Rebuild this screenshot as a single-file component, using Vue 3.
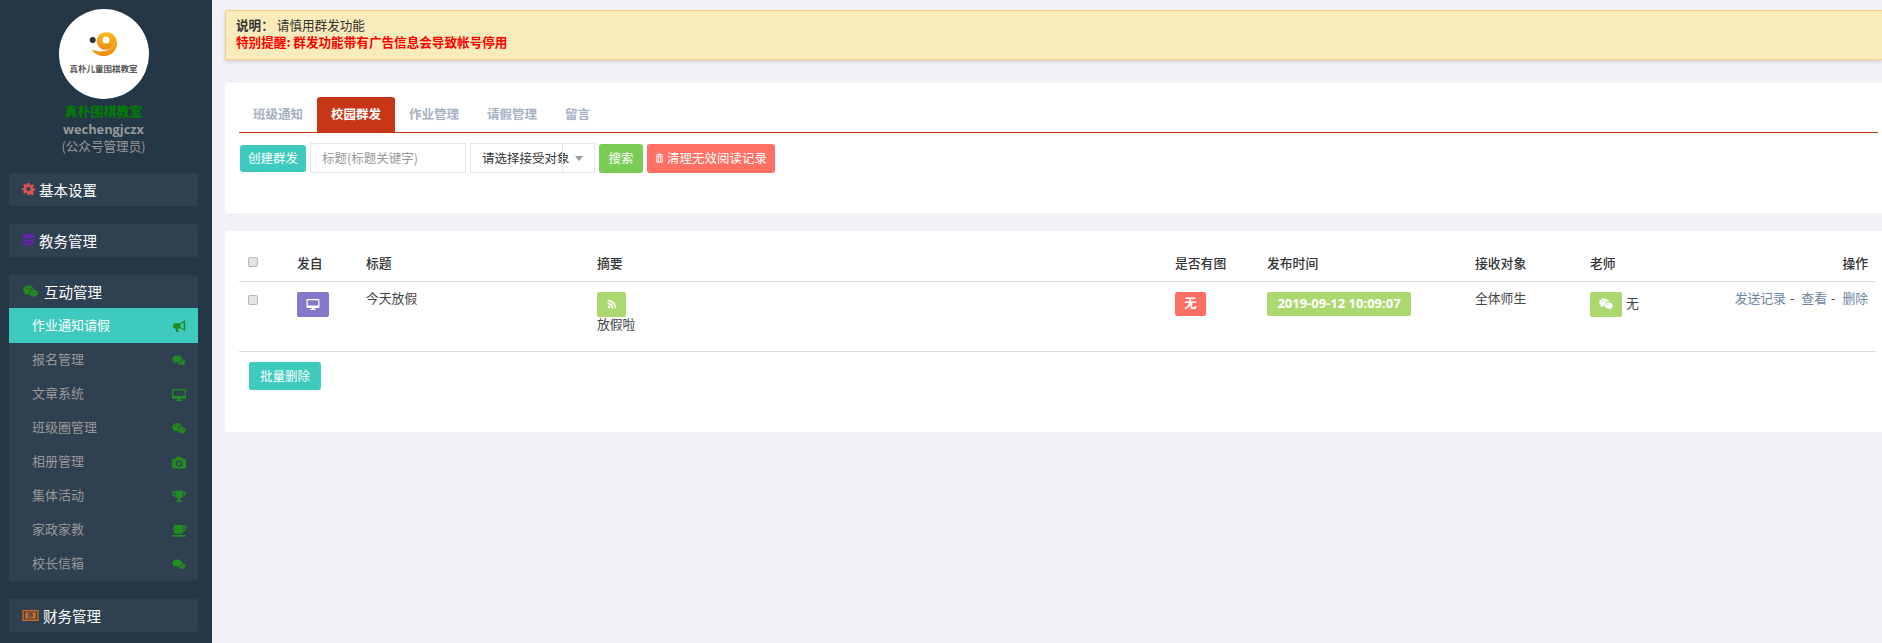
<script setup>
const sideItems = [
  { text: '报名管理', icon: 'comments' },
  { text: '文章系统', icon: 'desktop' },
  { text: '班级圈管理', icon: 'wechat' },
  { text: '相册管理', icon: 'camera' },
  { text: '集体活动', icon: 'trophy' },
  { text: '家政家教', icon: 'coffee' },
  { text: '校长信箱', icon: 'comments' },
]
const tabs = ['班级通知', '校园群发', '作业管理', '请假管理', '留言']
</script>

<template>
  <svg class="sprite" width="0" height="0" aria-hidden="true">
    <defs>
      <linearGradient id="logoOrange" x1="0" y1="0" x2="0" y2="1">
        <stop offset="0" stop-color="#f9bb1f"/>
        <stop offset="1" stop-color="#f08c10"/>
      </linearGradient>
    </defs>
    <symbol id="cog" viewBox="0 0 24 24">
      <path fill-rule="evenodd" d="M10 1h4l.6 3.2 2 .8L19.300 3.200l2.800 2.800-1.800 2.700.8 2 3.200.6v4l-3.200.6-.8 2 1.800 2.700-2.800 2.800-2.700-1.800-2 .8L14 23h-4l-.6-3.200-2-.8-2.700 1.800-2.800-2.800 1.800-2.700-.8-2L0 14.600v-4l3.200-.6.800-2L2.200 5.300 5 2.500l2.700 1.800 2-.8zM12 8a4 4 0 1 0 0 8 4 4 0 0 0 0-8z"/>
    </symbol>
    <symbol id="database" viewBox="0 0 24 24">
      <ellipse cx="12" cy="5" rx="11.500" ry="5"/>
      <path d="M.5 7.500c1 2.800 6.500 4.500 11.500 4.500s10.500-1.700 11.500-4.500v4C22.500 14.300 17 16 12 16S1.500 14.300.5 11.500zM.5 13.500C1.500 16.300 7 18 12 18s10.500-1.700 11.500-4.500v3.500c-1 2.800-6.500 4.500-11.500 4.500S1.500 19.800.5 17zM.5 18.800C1.500 21.300 7 22.500 12 22.500s10.500-1.200 11.500-3.700V20c-1 2.500-6.500 4-11.500 4S1.500 22.500.5 20z"/>
    </symbol>
    <symbol id="wechat" viewBox="0 0 28 24">
      <path fill-rule="evenodd" d="M10.500 1C4.900 1 .5 4.600.5 9c0 2.600 1.400 4.600 3.600 6.200L3 18.500l3.800-2c1.300.3 2.400.5 3.700.5h.9a7.500 7.500 0 0 1-.3-2.200C11.100 10.700 14.700 7.500 19.200 7.500h.8C19 3.700 15.100 1 10.500 1zM7 5.200a1.300 1.300 0 1 1 0 2.600 1.300 1.300 0 0 1 0-2.600zm7 0a1.300 1.300 0 1 1 0 2.600 1.300 1.300 0 0 1 0-2.600z"/>
      <path fill-rule="evenodd" d="M19.500 8.800c-4.400 0-7.400 3-7.400 6.300s3 6.300 7.400 6.300c.9 0 1.900-.2 2.800-.5l3 1.600-.8-2.700c1.800-1.300 3-3 3-4.700 0-3.300-3.500-6.300-8-6.300zm-2.500 3.500a1 1 0 1 1 0 2 1 1 0 0 1 0-2zm5 0a1 1 0 1 1 0 2 1 1 0 0 1 0-2z"/>
    </symbol>
    <symbol id="bullhorn" viewBox="0 0 24 24">
      <path d="M22 1h1.500v19H22l-7-4.500H10l1.500 6.500H7L5.200 15.500H4a3 3 0 0 1-3-3V9a3 3 0 0 1 3-3h10zM20.500 4.500 15 8v5.500l5.500 3.500z" fill-rule="evenodd"/>
    </symbol>
    <symbol id="comments" viewBox="0 0 28 24">
      <path d="M10.500 2C5 2 .5 5.100.5 9c0 2.200 1.400 4.100 3.600 5.400L2.500 18l4.400-2.400c1.100.3 2.400.4 3.600.4 5.500 0 10-3.100 10-7s-4.500-7-10-7z"/>
      <path d="M22.500 8c.3 4.700-4.500 9-11 9.500 1.400 1.900 3.900 3 6.500 3 .8 0 1.600-.1 2.400-.3l4.100 2.300-1.200-3.400c2-1.100 3.200-2.800 3.200-4.600 0-2.700-2-5-4.500-6.500z"/>
    </symbol>
    <symbol id="desktop" viewBox="0 0 26 24">
      <path fill-rule="evenodd" d="M2.500 2h21A2.500 2.500 0 0 1 26 4.500v13a2.500 2.500 0 0 1-2.500 2.500H16v2h2.500v2h-11v-2H10v-2H2.500A2.500 2.500 0 0 1 0 17.500v-13A2.500 2.500 0 0 1 2.500 2zM2.500 4.500V15h21V4.500z"/>
    </symbol>
    <symbol id="camera" viewBox="0 0 26 24">
      <path fill-rule="evenodd" d="M9 1.500h8l2 3.500h4a3 3 0 0 1 3 3v12a3 3 0 0 1-3 3H3a3 3 0 0 1-3-3V8a3 3 0 0 1 3-3h4zM13 8a6 6 0 1 0 0 12 6 6 0 0 0 0-12zm0 2.500a3.500 3.500 0 1 1 0 7 3.500 3.500 0 0 1 0-7z"/>
    </symbol>
    <symbol id="trophy" viewBox="0 0 26 24">
      <path fill-rule="evenodd" d="M6 1h14v2h6v3c0 4-3 6.500-7 7-1 1.500-2.500 2.500-4 3v3h3v3H8v-3h3v-3c-1.500-.5-3-1.500-4-3-4-.5-7-3-7-7V3h6zM2.500 5.500V6c0 2 1.500 3.800 4.200 4.500C6.200 9 6 7.300 6 5.500zM23.500 5.500H20c0 1.800-.2 3.500-.7 5 2.700-.7 4.200-2.500 4.200-4.500z"/>
    </symbol>
    <symbol id="coffee" viewBox="0 0 26 24">
      <path fill-rule="evenodd" d="M3 2h20a3 3 0 0 1 3 3v4a4 4 0 0 1-4 4h-1v1a4 4 0 0 1-4 4H7a4 4 0 0 1-4-4zM21 4.500v6h1a1.500 1.500 0 0 0 1.500-1.500V6A1.500 1.500 0 0 0 22 4.500zM0 20.500h26v1a2 2 0 0 1-2 2H2a2 2 0 0 1-2-2z"/>
    </symbol>
    <symbol id="money" viewBox="0 0 30 24">
      <path fill-rule="evenodd" d="M0 2h30v20H0zM2.500 4.500v15h25v-15zM5 6.500h20V17.500H5zM15 7.500a4.500 4.500 0 1 0 0 9 4.500 4.500 0 0 0 0-9zM14 9.500h2v5h1v1h-4v-1h1v-3h-1v-1z"/>
    </symbol>
    <symbol id="trash" viewBox="0 0 20 24">
      <path fill-rule="evenodd" d="M7 1h6l1 2.500h5v2.500H1V3.500h5zM2.500 7.500h15V21a2.500 2.500 0 0 1-2.500 2.500H5A2.500 2.500 0 0 1 2.500 21zM5 9.500V21h2V9.500zm4 0V21h2V9.500zm4 0V21h2V9.500z"/>
    </symbol>
    <symbol id="rss" viewBox="0 0 24 24">
      <circle cx="5" cy="19" r="3.500"/>
      <path d="M1.500 8.500c7.500 0 14 6.500 14 14h-4c0-5.500-4.500-10-10-10zM1.500 1.500c11.500 0 21 9.500 21 21h-4c0-9.500-7.500-17-17-17z"/>
    </symbol>
  </svg>

  <div class="page">
    <aside class="sidebar">
      <div class="profile">
        <div class="avatar">
          <svg class="logo-mark" viewBox="0 0 30 26">
            <circle cx="3.700" cy="9" r="3" fill="#333"/>
            <path d="M2.500 18.500C7 25 14 26 19 24.500 25 22.500 28.500 17 28 11.500 27.500 5 22.500 1 17 1c5 2 8 5.500 8 9.500 0 4.500-3 8-9 9.500-5 1-9.500 0-13.500-1.500z" fill="url(#logoOrange)"/>
            <circle cx="16.500" cy="10" r="8.800" fill="url(#logoOrange)"/>
            <circle cx="17" cy="9" r="3.600" fill="#fff"/>
          </svg>
          <span class="logo-text">真朴儿童围棋教室</span>
        </div>
        <div class="org">真朴围棋教室</div>
        <div class="account">wechengjczx</div>
        <div class="role">(公众号管理员)</div>
      </div>

      <nav class="nav">
        <div class="panel">
          <div class="panel-head"><svg class="head-icon red"><use href="#cog"/></svg>基本设置</div>
        </div>
        <div class="panel">
          <div class="panel-head"><svg class="head-icon purple"><use href="#database"/></svg>教务管理</div>
        </div>
        <div class="panel">
          <div class="panel-head"><svg class="head-icon green wide"><use href="#wechat"/></svg>互动管理</div>
          <ul class="side-list">
            <li class="side-item active">作业通知请假<svg class="item-icon"><use href="#bullhorn"/></svg></li>
            <li v-for="item in sideItems" :key="item.text" class="side-item">
              {{ item.text }}<svg class="item-icon"><use :href="'#' + item.icon"/></svg>
            </li>
          </ul>
        </div>
        <div class="panel">
          <div class="panel-head"><svg class="head-icon orange wider"><use href="#money"/></svg>财务管理</div>
        </div>
      </nav>
    </aside>

    <main class="main">
      <div class="alert">
        <div><b class="note-label">说明：</b>请慎用群发功能</div>
        <div class="warn">特别提醒: 群发功能带有广告信息会导致帐号停用</div>
      </div>

      <section class="card card-tools">
        <div class="tabs">
          <a v-for="(t, i) in tabs" :key="t" class="tab" :class="{ current: i === 1 }">{{ t }}</a>
        </div>
        <div class="tools">
          <button class="btn teal create">创建群发</button>
          <input class="field" placeholder="标题(标题关键字)" />
          <div class="select"><span class="select-text">请选择接受对象</span><span class="caret-box"><i class="caret"></i></span></div>
          <button class="btn green-btn search">搜索</button>
          <button class="btn red-btn clear"><svg class="trash"><use href="#trash"/></svg>清理无效阅读记录</button>
        </div>
      </section>

      <section class="card card-table">
        <table class="table">
          <colgroup>
            <col class="c1" /><col class="c2" /><col class="c3" /><col class="c4" />
            <col class="c5" /><col class="c6" /><col class="c7" /><col class="c8" /><col />
          </colgroup>
          <thead>
            <tr>
              <th class="check-cell"><input type="checkbox" class="check" /></th>
              <th>发自</th><th>标题</th><th>摘要</th><th>是否有图</th><th>发布时间</th><th>接收对象</th><th>老师</th>
              <th class="right">操作</th>
            </tr>
          </thead>
          <tbody>
            <tr>
              <td class="check-cell"><input type="checkbox" class="check" /></td>
              <td><span class="chip purple-bg"><svg class="chip-icon"><use href="#desktop"/></svg></span></td>
              <td class="plain">今天放假</td>
              <td><span class="chip lime-bg narrow"><svg class="chip-icon small"><use href="#rss"/></svg></span><div class="summary">放假啦</div></td>
              <td><span class="tag red-bg no">无</span></td>
              <td><span class="tag lime-bg date">2019-09-12 10:09:07</span></td>
              <td class="plain">全体师生</td>
              <td class="teacher"><span class="chip lime-bg"><svg class="chip-icon"><use href="#wechat"/></svg></span><span class="teacher-name">无</span></td>
              <td class="right ops"><a>发送记录</a><span class="sep">-</span><a>查看</a><span class="sep">-</span><a>删除</a></td>
            </tr>
          </tbody>
        </table>
        <button class="btn teal batch">批量删除</button>
      </section>
    </main>
  </div>
</template>

<style>
html, body { margin: 0; background: #f0f2f7; overflow: hidden; }
</style>

<style scoped>
* { box-sizing: border-box; }
.sprite { position: absolute; }
.page {
  display: flex;
  width: 1882px;
  height: 643px;
  overflow: hidden;
  font-family: "Noto Sans CJK SC", "Open Sans", sans-serif;
  font-size: 13px;
  color: #333;
  background: #f0f2f7;
}
.sidebar { width: 212px; flex: none; background: #243747; padding: 9px 14px 0 9px; }
.profile { display: flex; flex-direction: column; align-items: center; height: 164px; }
.avatar {
  width: 90px; height: 90px; border-radius: 50%; background: #fff;
  display: flex; flex-direction: column; align-items: center; padding-top: 22px;
}
.logo-mark { width: 30px; height: 26px; flex: none; }
.logo-text { font-size: 8.500px; font-weight: 700; color: #555; line-height: 12px; white-space: nowrap; margin-top: 5px; }
.org { color: #008000; font-weight: 700; font-size: 13px; line-height: 18px; margin-top: 3px; }
.account { color: #999; font-weight: 700; font-size: 12.800px; line-height: 17px; margin-top: 1px; font-family: "Open Sans", sans-serif; }
.role { color: #999; font-size: 12.600px; line-height: 16px; }
.nav { display: flex; flex-direction: column; gap: 18px; }
.panel { background: #2f4050; border-radius: 2px; overflow: hidden; }
.panel-head {
  height: 33px; display: flex; align-items: center; padding: 0 0 1px 13px;
  color: #fff; font-size: 14.500px;
}
.head-icon { width: 13px; height: 14px; margin-right: 4px; fill: currentColor; flex: none; }
.head-icon.wide { width: 17px; height: 13px; margin-right: 5px; }
.head-icon.wider { width: 17px; height: 13px; margin-right: 4px; }
.red { color: #d9534f; }
.purple { color: #6126a8; }
.green { color: #228b22; }
.orange { color: #d2691e; }
.side-list { list-style: none; margin: 0; padding: 0; }
.side-item {
  height: 34px; display: flex; align-items: center; justify-content: space-between;
  padding: 0 12px 3px 23px; color: #999; font-size: 13px;
}
.side-item.active { background: #3ecabe; color: #fff; height: 35px; }
.item-icon { width: 14px; height: 13px; fill: #228b22; position: relative; top: 2px; }
.main { flex: 1; min-width: 0; padding: 10px 0 0 13px; }
.alert {
  height: 50px; padding: 5px 10px; background: #f9ecba; border: 1px solid #f5cf87;
  border-right: 0; border-radius: 2px 0 0 2px; box-shadow: 0 2px 4px rgba(0, 0, 0, .14);
  color: #333; font-size: 12.600px; line-height: 17px;
}
.note-label { margin-right: 3px; }
.warn { color: #f00; font-weight: 700; }
.card { background: #fff; border-radius: 4px 0 0 4px; padding-left: 14px; padding-right: 6px; }
.card-tools { height: 130px; margin-top: 23px; padding-top: 14px; padding-right: 4px; }
.tabs { display: flex; height: 36px; border-bottom: 1px solid #c73616; }
.tab {
  height: 35px; padding: 0 14px 3px; display: flex; align-items: center;
  color: #a7b1c2; font-weight: 700; font-size: 12.500px; border-radius: 3px 3px 0 0;
}
.tab.current { background: #c73616; color: #fff; }
.tools { display: flex; align-items: center; margin-top: 10px; height: 30px; padding-left: 1px; }
.btn {
  border: 0; border-radius: 3px; color: #fff; font-family: inherit; font-size: 12.500px;
  padding: 0 0 2px; display: flex; align-items: center; justify-content: center;
}
.teal { background: #3ecabe; }
.create { width: 66px; height: 27px; }
.field {
  width: 156px; height: 30px; margin-left: 4px; border: 1px solid #e5e6e7; padding: 0 11px 2px;
  font-family: inherit; font-size: 12.500px; color: #333; outline: 0; background: #fff;
}
.field::placeholder { color: #999; }
.select {
  width: 125px; height: 30px; margin-left: 4px; border: 1px solid #e5e6e7; display: flex;
  align-items: center; justify-content: space-between; padding-left: 11px; font-size: 12.500px; color: #333;
}
.caret-box { width: 32px; height: 100%; margin-left: -32px; border-left: 1px solid #e5e6e7; display: flex; align-items: center; justify-content: center; flex: none; }
.select-text { white-space: nowrap; margin-top: -2px; }
.caret { width: 0; height: 0; border-style: solid; border-width: 5px 4px 0; border-color: #999 transparent transparent; }
.green-btn { background: #79cd55; }
.red-btn { background: #ff6f63; }
.search { width: 44px; height: 29px; margin-left: 4px; }
.clear { width: 128px; height: 29px; margin-left: 4px; }
.trash { width: 9px; height: 10px; fill: #fff; margin: 2px 3px 0 0; }
.card-table { height: 201px; margin-top: 18px; padding-top: 18px; }
.table { width: 100%; table-layout: fixed; border-collapse: collapse; font-size: 12.800px; }
.c1 { width: 58px; }
.c2 { width: 69px; }
.c3 { width: 231px; }
.c4 { width: 578px; }
.c5 { width: 92px; }
.c6 { width: 208px; }
.c7 { width: 115px; }
.c8 { width: 100px; }
th {
  height: 32px; padding: 0 0 4px; text-align: left; font-weight: 500; color: #333;
  border-bottom: 1px solid #ddd;
}
td { height: 70px; padding: 10px 0 0; vertical-align: top; border-bottom: 1px solid #ddd; color: #444; line-height: 17px; }
.check-cell { padding-left: 9px; }
th.check-cell { padding-bottom: 6px; }
.check { width: 10px; height: 10px; margin: 0; display: block; appearance: none; background: #e4e4e4; border: 1px solid #b8b8b8; border-radius: 2px; }
td .check { margin-top: 3px; }
.plain { padding-top: 7px; }
.chip { width: 32px; height: 25px; border-radius: 2px; display: flex; align-items: center; justify-content: center; }
.narrow { width: 29px; }
.purple-bg { background: #8777c8; }
.lime-bg { background: #acd96f; }
.red-bg { background: #ff6f63; }
.chip-icon { width: 14px; height: 12px; fill: #fff; }
.chip-icon.small { width: 10px; height: 10px; }
.summary { line-height: 17px; margin-top: -2px; }
.tag {
  display: flex; align-items: center; justify-content: center; height: 24px; width: 31px;
  border-radius: 2px; color: #fff; font-weight: 700; font-size: 12.500px;
}
.no { padding-bottom: 2px; }
.date { width: 144px; font-size: 13px; font-family: "Open Sans", sans-serif; white-space: nowrap; }
.teacher { display: flex; align-items: flex-start; height: 70px; }
.teacher-name { margin: 2px 0 0 4px; }
.right { text-align: right; padding-right: 8px; }
.ops { padding-top: 7px; color: #444; white-space: nowrap; }
.ops a { color: #6b84a4; }
.sep { margin: 0 7px 0 4px; }
.batch { width: 72px; height: 28px; margin: 10px 0 0 10px; }
</style>
